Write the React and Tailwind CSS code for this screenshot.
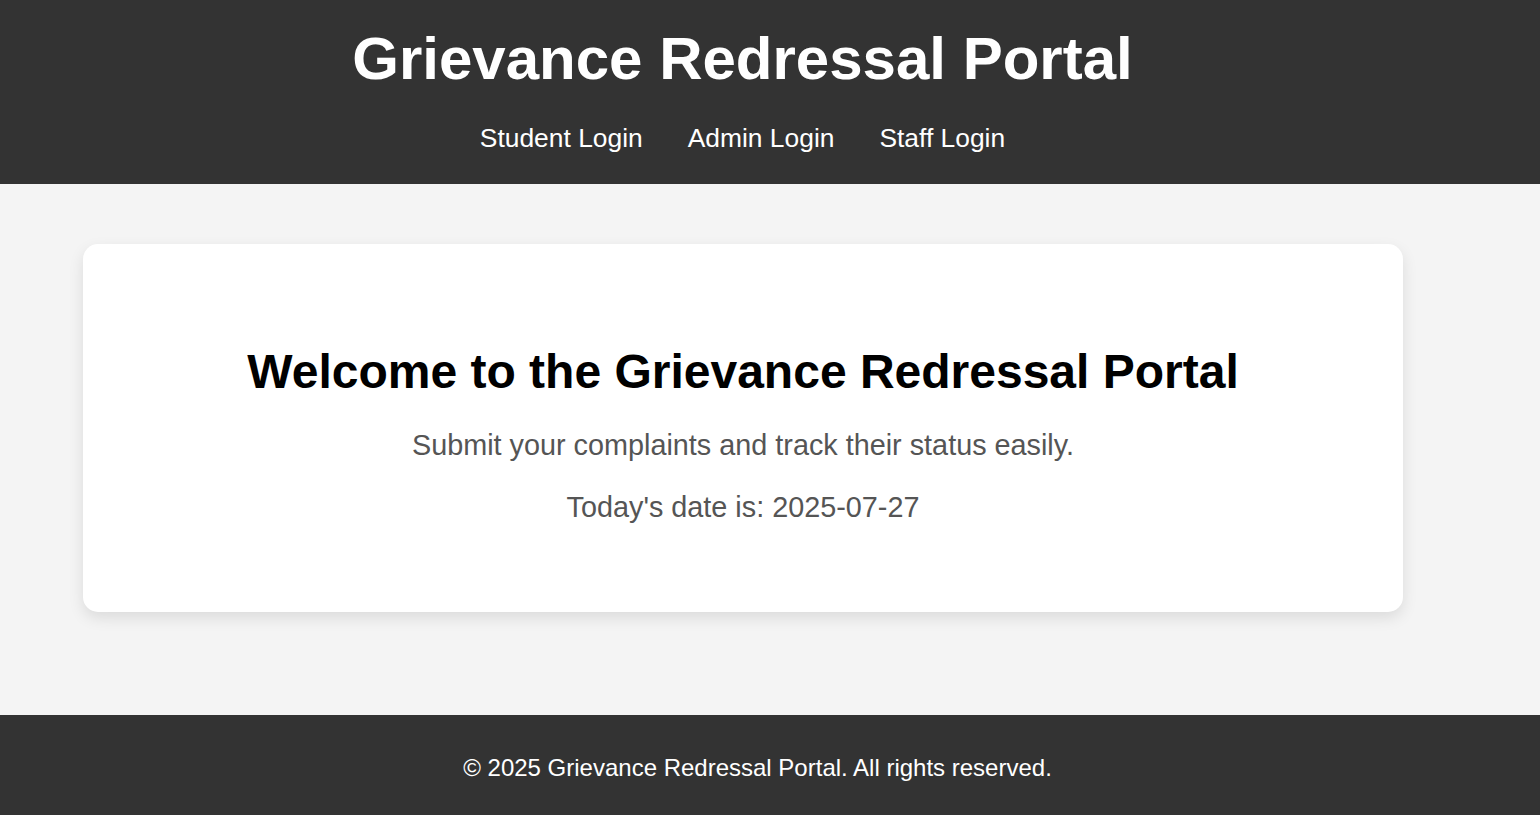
export default function App() {
  return (
    <div
      className="flex h-[815px] flex-col bg-[#f4f4f4] text-black"
      style={{ fontFamily: '"Liberation Sans", Arial, sans-serif' }}
    >
      <header className="bg-[#333333] text-white">
        <div className="flex flex-col items-center pr-[55px] pt-[24px] pb-[31px]">
          <h1 className="m-0 text-[60px] font-bold leading-[69px]">Grievance Redressal Portal</h1>
          <nav className="mt-[30px] flex gap-[45px] text-[26.4px] leading-[30px]">
            <a href="#" className="text-white no-underline">Student Login</a>
            <a href="#" className="text-white no-underline">Admin Login</a>
            <a href="#" className="text-white no-underline">Staff Login</a>
          </nav>
        </div>
      </header>

      <main className="flex-1 pr-[54px] pt-[60px]">
        <div className="mx-[83px] rounded-[15px] bg-white px-[60px] py-[60px] text-center shadow-[0_6px_15px_rgba(0,0,0,0.1)]">
          <h2 className="mt-[40px] text-[48px] font-bold leading-[55px]">
            Welcome to the Grievance Redressal Portal
          </h2>
          <p className="mt-[30px] text-[28.8px] leading-[33px] text-[#555555]">
            Submit your complaints and track their status easily.
          </p>
          <p className="mt-[29px] mb-[28px] text-[28.8px] leading-[33px] text-[#555555]">
            Today's date is: 2025-07-27
          </p>
        </div>
      </main>

      <footer className="h-[100px] bg-[#333333] text-white">
        <div className="pr-[25px] pt-[39px] text-center text-[24px] leading-[28px]">
          © 2025 Grievance Redressal Portal. All rights reserved.
        </div>
      </footer>
    </div>
  );
}
